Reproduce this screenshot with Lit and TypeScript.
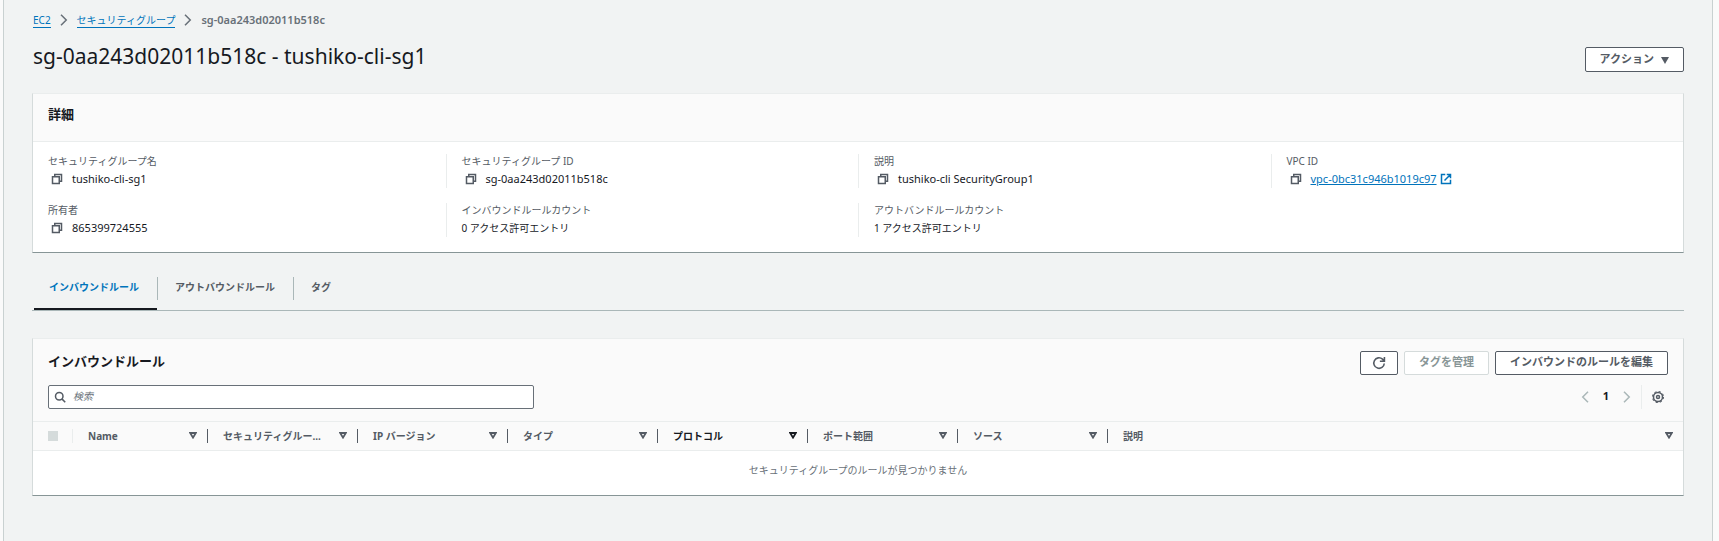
import { LitElement, html, css } from "lit";
import { customElement } from "lit/decorators.js";
import { classMap } from "lit/directives/class-map.js";

const copyIcon = html`<svg class="icon" viewBox="0 0 16 16" fill="none" stroke="currentColor" stroke-width="2"><path d="M2 5h9v9H2z" /><path d="M5 5V2h9v9h-3" /></svg>`;
const chevron = (d: string) => html`<svg class="icon" viewBox="0 0 16 16" fill="none" stroke="currentColor" stroke-width="2"><path d=${d} /></svg>`;
const RIGHT = "M4 1l7 7-7 7";
const LEFT = "M12 1L5 8l7 7";

interface Detail { label: string; value: string; copy?: boolean; link?: boolean }
const details: Detail[][] = [
  [
    { label: "セキュリティグループ名", value: "tushiko-cli-sg1", copy: true },
    { label: "セキュリティグループ ID", value: "sg-0aa243d02011b518c", copy: true },
    { label: "説明", value: "tushiko-cli SecurityGroup1", copy: true },
    { label: "VPC ID", value: "vpc-0bc31c946b1019c97", copy: true, link: true },
  ],
  [
    { label: "所有者", value: "865399724555", copy: true },
    { label: "インバウンドルールカウント", value: "0 アクセス許可エントリ" },
    { label: "アウトバンドルールカウント", value: "1 アクセス許可エントリ" },
  ],
];

const columns = ["Name", "セキュリティグルー...", "IP バージョン", "タイプ", "プロトコル", "ポート範囲", "ソース", "説明"];
const SORTED = 4;

@customElement("app-root")
export class AppRoot extends LitElement {
  static styles = css`
    :host {
      display: block;
      min-height: 100vh;
      box-sizing: border-box;
      padding: 0 6px 0 3px;
      background: #fafafa;
      color: #16191f;
      font: 10px/18px "Noto Sans", "Noto Sans CJK JP", sans-serif;
    }
    * { box-sizing: border-box; }
    button, input { font: inherit; color: inherit; }
    a { color: #0073bb; }
    h1, h2, dl, dd { margin: 0; }
    .icon { display: block; width: 12px; height: 12px; flex: none; }
    .page {
      min-height: 100vh;
      padding: 12px 28px 0;
      background: #f1f3f3;
      border: solid #c9d1d1;
      border-width: 0 1px;
    }
    .crumbs { display: flex; align-items: center; gap: 7px; color: #687078; height: 16px; padding-left: 1px; }
    .crumbs a { text-decoration: none; border-bottom: 1px solid #0073bb; line-height: 14px; }
    .crumbs .here { font-size: 11px; font-weight: 600; }
    .title { display: flex; justify-content: space-between; align-items: flex-start; margin-top: 14px; height: 51px; }
    h1 { font-size: 21px; line-height: 28px; font-weight: 400; padding-left: 1px; }
    .btn {
      height: 24px;
      padding: 0 14px 2px;
      border: 1px solid #545b64;
      border-radius: 2px;
      background: #fff;
      color: #545b64;
      font-size: 11px;
      font-weight: 700;
      line-height: 20px;
      display: flex;
      align-items: center;
      gap: 7px;
    }
    .btn:disabled { border-color: #d5dbdb; color: #879596; }
    .btn.square { padding: 0 11px; }
    .square .icon { width: 14px; height: 14px; }
    .title .btn { margin-top: 5px; height: 25px; }
    .btn .tri { margin-top: 4px; }
    .panel {
      background: #fff;
      border: 1px solid #d5dbdb;
      border-top-color: #eaeded;
      border-bottom-color: #879596;
    }
    .head { background: #fafafa; border-bottom: 1px solid #eaeded; }
    h2 { font-size: 13px; line-height: 20px; font-weight: 700; }
    .simple { padding: 10px 15px 17px; }
    .details { padding: 12px 0 15px; display: grid; gap: 15px; }
    .row { display: grid; grid-template-columns: repeat(4, 1fr); }
    .cell { padding: 0 15px; height: 34px; border-left: 1px solid #eaeded; }
    .cell:first-child { border-left: 0; }
    dt { color: #545b64; line-height: 14px; margin-bottom: 2px; }
    dd { display: flex; align-items: center; line-height: 18px; gap: 9px; }
    .latin { font-size: 11px; }
    .copy { border: 0; background: none; padding: 0 0 0 3px; color: #545b64; }
    .ext { display: flex; align-items: center; gap: 3px; }
    .tabs { display: flex; align-items: flex-start; border-bottom: 1px solid #aab7b8; margin: 24px 0 27px; height: 34px; }
    .tab {
      position: relative;
      border: 0;
      border-right: 1px solid #aab7b8;
      background: none;
      padding: 0 18px 3px 17px;
      height: 23px;
      font-weight: 700;
      line-height: 20px;
      color: #545b64;
    }
    .tab:last-child { border-right: 0; }
    .active { color: #0073bb; }
    .active::after { content: ""; position: absolute; left: 2px; right: 0; bottom: -10px; height: 2px; background: #16191f; }
    .tools { padding: 12px 15px; display: grid; gap: 10px; }
    .bar { display: flex; justify-content: space-between; align-items: flex-start; }
    .actions { display: flex; gap: 6px; }
    .search {
      display: flex;
      align-items: center;
      gap: 7px;
      flex: 0 1 486px;
      height: 24px;
      padding: 0 5px;
      background: #fff;
      border: 1px solid #687078;
      border-radius: 2px;
      color: #545b64;
    }
    .search input { border: 0; outline: 0; background: none; flex: 1; padding: 0 0 2px; min-width: 0; height: 20px; }
    .search input::placeholder { color: #687078; font-style: italic; opacity: 1; }
    .pager { display: flex; align-items: center; height: 24px; color: #545b64; }
    .pager button { border: 0; background: none; padding: 0; }
    .pager .page-no { width: 30px; padding-bottom: 2px; color: #16191f; font-weight: 700; font-size: 11px; }
    .pager button:disabled { color: #aab7b8; }
    .gear { display: flex; align-items: center; height: 24px; margin-left: 8px; padding: 0 4px 0 10px; border-left: 1px solid #eaeded; }
    table { width: 100%; border-collapse: collapse; table-layout: fixed; }
    th { height: 28px; padding: 0; background: #fafafa; border-bottom: 1px solid #eaeded; color: #545b64; text-align: left; }
    .pick { width: 40px; }
    .col { width: 150px; }
    .first { width: 135px; }
    .rest { width: auto; }
    .th { display: flex; align-items: center; justify-content: space-between; gap: 8px; height: 14px; padding: 0 10px 0 15px; border-right: 1px solid #545b64; }
    .th.pickbox { border-color: #eaeded; }
    .th.last { border-right: 0; }
    .name { white-space: nowrap; }
    .sorted { color: #16191f; }
    .tri { display: block; width: 8px; height: 7px; flex: none; }
    .box { appearance: none; width: 10px; height: 10px; margin: 0; background: #d5dbdb; }
    td { height: 45px; padding: 0 0 6px; text-align: center; color: #687078; }
  `;

  private detail(d: Detail) {
    return html`<div class="cell">
      <dt>${d.label}</dt>
      <dd class=${classMap({ latin: !!d.copy })}>
        ${d.copy ? html`<button class="copy" aria-label="${d.label} copy">${copyIcon}</button>` : ""}
        ${d.link
          ? html`<a class="ext" href="#vpc">${d.value}<svg class="icon" viewBox="0 0 16 16" fill="none" stroke="currentColor" stroke-width="2"><path d="M7 2H2v12h12V9M9 2h5v5M14 2L6 10" /></svg></a>`
          : html`<span>${d.value}</span>`}
      </dd>
    </div>`;
  }

  render() {
    return html`<main class="page">
      <nav class="crumbs" aria-label="breadcrumb">
        <a href="#ec2">EC2</a>${chevron(RIGHT)}<a href="#groups">セキュリティグループ</a>${chevron(RIGHT)}<span class="here">sg-0aa243d02011b518c</span>
      </nav>
      <header class="title">
        <h1>sg-0aa243d02011b518c - tushiko-cli-sg1</h1>
        <button class="btn">アクション<svg class="tri" viewBox="0 0 8 7"><path d="M0 0h8L4 7z" fill="currentColor" /></svg></button>
      </header>
      <section class="panel">
        <div class="head simple"><h2>詳細</h2></div>
        <div class="details">${details.map((r) => html`<dl class="row">${r.map((d) => this.detail(d))}</dl>`)}</div>
      </section>
      <div class="tabs" role="tablist">
        <button class="tab active" role="tab" aria-selected="true">インバウンドルール</button>
        <button class="tab" role="tab" aria-selected="false">アウトバウンドルール</button>
        <button class="tab" role="tab" aria-selected="false">タグ</button>
      </div>
      <section class="panel">
        <div class="head tools">
          <div class="bar">
            <h2>インバウンドルール</h2>
            <div class="actions">
              <button class="btn square" aria-label="refresh"><svg class="icon" viewBox="0 0 16 16" fill="none" stroke="currentColor" stroke-width="1.800"><path d="M14 8.500A6 6 0 1 1 12 3.600L14 5.500M14.200 1v5H9" /></svg></button>
              <button class="btn" disabled>タグを管理</button>
              <button class="btn">インバウンドのルールを編集</button>
            </div>
          </div>
          <div class="bar">
            <label class="search"><svg class="icon" viewBox="0 0 16 16" fill="none" stroke="currentColor" stroke-width="2"><circle cx="7" cy="7" r="5" /><path d="M10.500 10.500L15 15" /></svg><input type="text" placeholder="検索" aria-label="検索" /></label>
            <div class="pager">
              <button disabled aria-label="previous">${chevron(LEFT)}</button>
              <button class="page-no">1</button>
              <button disabled aria-label="next">${chevron(RIGHT)}</button>
              <div class="gear"><button aria-label="settings"><svg class="icon" viewBox="0 0 16 16" fill="none" stroke="currentColor"><circle cx="8" cy="8" r="6" stroke-width="2" /><circle cx="8" cy="8" r="7.300" stroke-width="1.400" stroke-dasharray="2.870 2.870" /><circle cx="8" cy="8" r="2" stroke-width="2" /></svg></button></div>
            </div>
          </div>
        </div>
        <table>
          <thead><tr>
            <th class="pick"><div class="th pickbox"><input class="box" type="checkbox" disabled aria-label="select all" /></div></th>
            ${columns.map((c, i) => html`<th class=${classMap({ first: i === 0, col: i > 0 && i < 7, rest: i === 7, sorted: i === SORTED })}>
              <div class=${classMap({ th: true, last: i === 7 })}><span class="name">${c}</span><svg class="tri" viewBox="0 0 8 7"><path d="M1.200 1h5.600L4 5.600z" fill="none" stroke="currentColor" stroke-width="1.800" /></svg></div></th>`)}
          </tr></thead>
          <tbody><tr><td colspan="9">セキュリティグループのルールが見つかりません</td></tr></tbody>
        </table>
      </section>
    </main>`;
  }
}
